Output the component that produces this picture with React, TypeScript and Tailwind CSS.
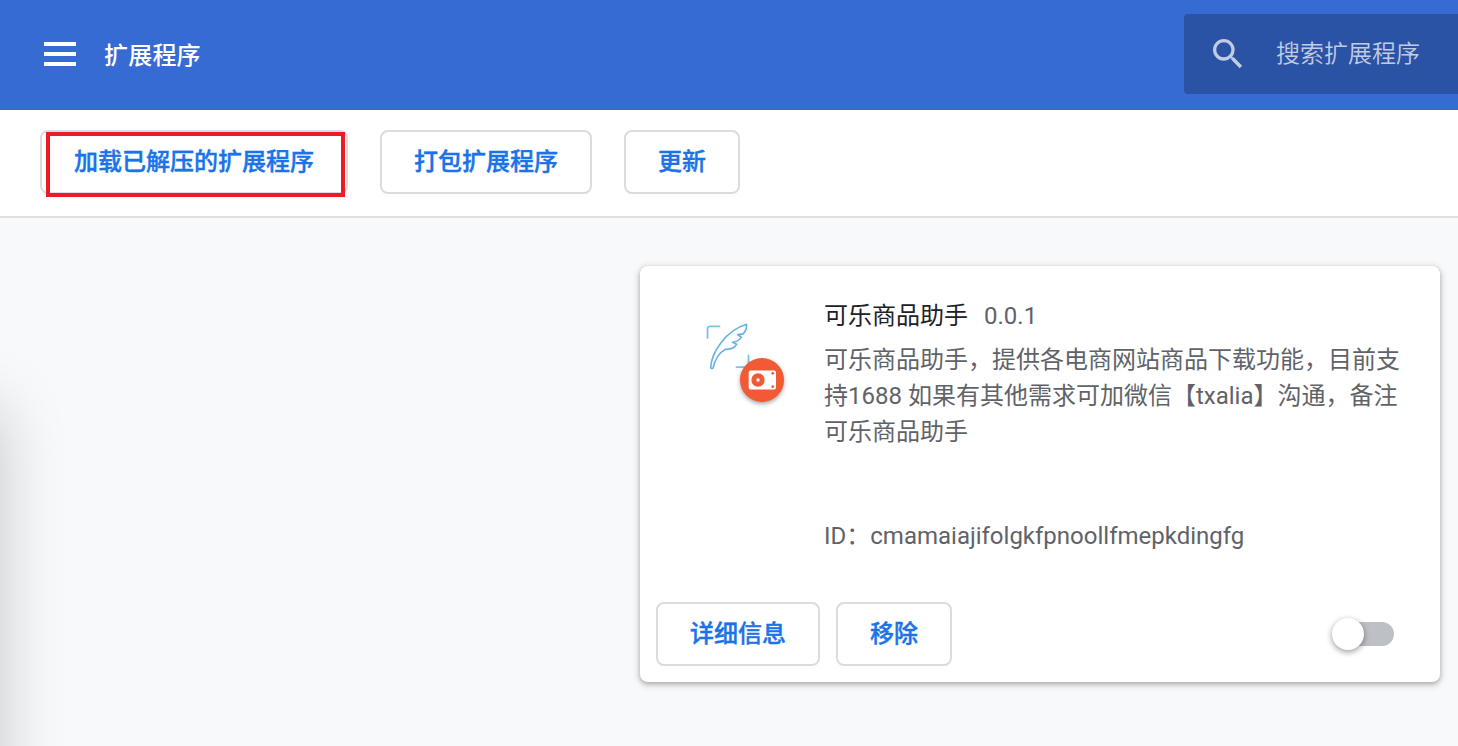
import React from 'react';
import { MdSearch } from 'react-icons/md';

const OutlineButton: React.FC<{ label: string }> = ({ label }) => (
  <button className="h-16 px-8 border-2 border-[#dadce0] rounded-lg bg-white text-[#1a73e8] text-2xl leading-9 font-medium whitespace-nowrap [-webkit-text-stroke:0.4px_#1a73e8]">
    {label}
  </button>
);

const Header: React.FC = () => (
  <header className="h-[110px] shrink-0 bg-[#376bd4] flex items-center justify-between pl-11">
    <div className="flex items-center gap-7">
      <button className="flex flex-col gap-1.5 w-8 -mt-0.5" aria-label="menu">
        <span className="h-1 w-full bg-white" />
        <span className="h-1 w-full bg-white" />
        <span className="h-1 w-full bg-white" />
      </button>
      <h1 className="text-2xl font-medium text-white pt-0.5 tracking-[0.2px]">扩展程序</h1>
    </div>
    <div className="w-[274px] h-20 -mt-0.5 pl-6 flex items-center gap-7 rounded-l bg-[#2b53a5] text-[#c0cce4]">
      <MdSearch className="w-10 h-10" />
      <span className="text-2xl font-[350]">搜索扩展程序</span>
    </div>
  </header>
);

const Toolbar: React.FC = () => (
  <div className="h-[108px] shrink-0 bg-white border-b-2 border-[#dfe0e2] flex items-start gap-8 pl-10 pt-5">
    <div className="relative flex">
      <OutlineButton label="加载已解压的扩展程序" />
      <div className="absolute left-1.5 top-0.5 w-[299px] h-[65px] border-4 border-[#ed1c24]" />
    </div>
    <OutlineButton label="打包扩展程序" />
    <OutlineButton label="更新" />
  </div>
);

const ExtensionIcon: React.FC = () => (
  <svg className="w-[110px] h-[110px]" viewBox="0 0 110 110" fill="none">
    <g stroke="#7fc0ea" strokeWidth="1.8" strokeLinecap="round" strokeLinejoin="round">
      <path d="M17.5 28V19Q17.5 16.4 20 16.4H29.5" />
      <path d="M58.5 45.5V57.2H46.5" />
      <path
        stroke="#68b3e5"
        strokeWidth="1.7"
        d="M20.7 57.500C21.500 42 36 20.500 56.600 14.300C56.800 18 55.500 21.500 53.200 23.800L47.700 24.700L51.300 27C50 29.800 47.500 31.600 42.500 32.300L46.700 34.200C45 37.500 41 39.500 35.500 39.300C29.500 42.500 24.800 50 23.200 57.500C22.700 59 20.800 58.800 20.700 57.500Z"
      />
    </g>
    <circle cx="72" cy="70" r="22" fill="#f15a35" className="drop-shadow-[0_2px_2px_rgba(0,0,0,0.35)]" />
    <rect x="58.7" y="60.5" width="27.3" height="19" rx="1.8" fill="white" />
    <circle cx="68" cy="70" r="6.7" fill="#f15a35" />
    <circle cx="68" cy="70" r="1.7" fill="white" />
    <circle cx="82.7" cy="63.3" r="1.4" fill="#f15a35" />
    <circle cx="82.7" cy="76.7" r="1.4" fill="#f15a35" />
  </svg>
);

const ExtensionCard: React.FC = () => (
  <article className="w-[800px] h-[416px] bg-white rounded-lg flex flex-col justify-between px-4 pb-4 pt-8 shadow-[0_2px_4px_rgba(60,64,67,0.3),0_2px_6px_2px_rgba(60,64,67,0.15)]">
    <div className="flex pl-[34px]">
      <div className="w-[134px] pt-3 shrink-0">
        <ExtensionIcon />
      </div>
      <div className="w-[578px] text-2xl leading-9 text-[#5f6368]">
        <div className="flex gap-4">
          <h2 className="text-[#202124]">可乐商品助手</h2>
          <span>0.0.1</span>
        </div>
        <p className="mt-2">
          可乐商品助手，提供各电商网站商品下载功能，目前支<br />
          持1688 如果有其他需求可加微信【txalia】沟通，备注<br />
          可乐商品助手
        </p>
        <p className="mt-[68px]">ID：cmamaiajifolgkfpnoollfmepkdingfg</p>
      </div>
    </div>
    <div className="flex items-center gap-4">
      <OutlineButton label="详细信息" />
      <OutlineButton label="移除" />
      <button className="ml-auto mr-[30px] w-[62px] h-8 flex items-center" aria-label="toggle">
        <span className="w-8 h-8 shrink-0 rounded-full bg-white z-10 shadow-[0_2px_6px_rgba(0,0,0,0.4)]" />
        <span className="-ml-6 w-[54px] h-6 shrink-0 rounded-full bg-[#bdc1c6]" />
      </button>
    </div>
  </article>
);

const App: React.FC = () => {
  return (
    <div className="relative w-full h-[746px] overflow-hidden flex flex-col bg-[#f8f9fb] font-['Roboto','Noto_Sans_CJK_SC',sans-serif]">
      {/* soft shadow cast from the left edge */}
      <div className="absolute -left-[300px] top-[408px] w-[300px] h-[600px] shadow-[0_0_60px_rgba(16,20,0,0.21)]" />
      <Header />
      <Toolbar />
      <main className="flex-1 flex justify-end items-start pt-12 pr-[18px]">
        <ExtensionCard />
      </main>
    </div>
  );
};

export default App;
